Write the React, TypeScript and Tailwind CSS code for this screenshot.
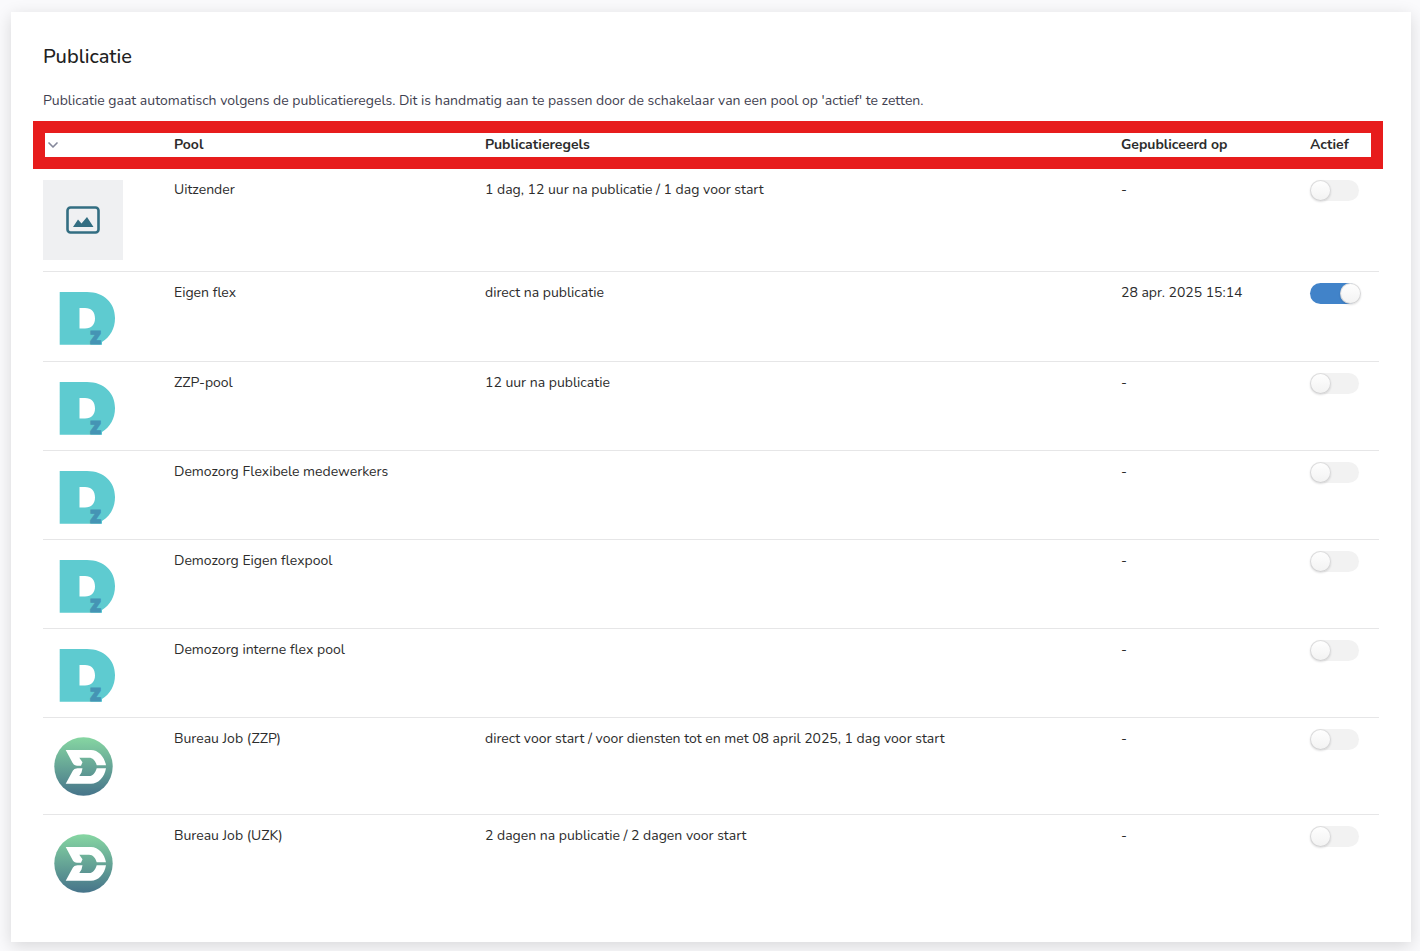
import { ChevronDown } from "lucide-react";

type Logo = "placeholder" | "demozorg" | "bureau";

interface Pool {
    name: string;
    rules: string;
    publishedAt: string;
    active: boolean;
    logo: Logo;
    logoHeight: number;
}

const pools: Pool[] = [
    { name: "Uitzender", rules: "1 dag, 12 uur na publicatie / 1 dag voor start", publishedAt: "-", active: false, logo: "placeholder", logoHeight: 80 },
    { name: "Eigen flex", rules: "direct na publicatie", publishedAt: "28 apr. 2025 15:14", active: true, logo: "demozorg", logoHeight: 67 },
    { name: "ZZP-pool", rules: "12 uur na publicatie", publishedAt: "-", active: false, logo: "demozorg", logoHeight: 66 },
    { name: "Demozorg Flexibele medewerkers", rules: "", publishedAt: "-", active: false, logo: "demozorg", logoHeight: 66 },
    { name: "Demozorg Eigen flexpool", rules: "", publishedAt: "-", active: false, logo: "demozorg", logoHeight: 66 },
    { name: "Demozorg interne flex pool", rules: "", publishedAt: "-", active: false, logo: "demozorg", logoHeight: 66 },
    { name: "Bureau Job (ZZP)", rules: "direct voor start / voor diensten tot en met 08 april 2025, 1 dag voor start", publishedAt: "-", active: false, logo: "bureau", logoHeight: 74 },
    { name: "Bureau Job (UZK)", rules: "2 dagen na publicatie / 2 dagen voor start", publishedAt: "-", active: false, logo: "bureau", logoHeight: 74 },
];

function PlaceholderLogo() {
    return (
        <svg viewBox="0 0 80 80" className="block size-20 bg-[#eff0f2]" aria-hidden="true">
            <rect x="24.5" y="27.5" width="31" height="25" rx="3" fill="none" stroke="#336e82" strokeWidth="2.6" />
            <path d="M30 47 L35 39.5 L38.5 43.5 L44 37 L50.5 47 Z" fill="#336e82" />
        </svg>
    );
}

function DemozorgLogo() {
    return (
        <svg viewBox="0 0 80 66" className="block h-[66px] w-20 overflow-visible" aria-hidden="true">
            <path
                fillRule="evenodd"
                fill="#5ecbd0"
                d="M16.7 9 H44 C61 9 72 20 72 35 C72 46 67 54 59 59 V61.7 H16.7 Z M36.5 25 V45.5 H42 C48.5 45.5 52 41.5 52 35.5 C52 29 48.5 25 42 25 Z"
            />
            <text x="47" y="61" fontSize="22" fontWeight="800" fill="#4594b4" stroke="#4594b4" strokeWidth="0.8" className="font-['Open_Sans',sans-serif]">z</text>
        </svg>
    );
}

function BureauLogo({ id }: { id: string }) {
    return (
        <svg viewBox="0 0 80 74" className="block h-[74px] w-20" aria-hidden="true">
            <defs>
                <linearGradient id={id} x1="0" y1="0" x2="0" y2="1">
                    <stop offset="0" stopColor="#86d6a2" />
                    <stop offset="1" stopColor="#46748a" />
                </linearGradient>
            </defs>
            <circle cx="40.5" cy="37.5" r="29.2" fill={`url(#${id})`} />
            <path
                fill="#fff"
                d="M22.7 21 H48 C55.5 21 61.5 28 63 36.2 H53.7 C52.5 32 50 28.7 46 28.7 H36.3 L39.5 33.3 L38 36.7 H34 C30.5 36.5 30 34.5 28.7 32.2 Z"
            />
            <path
                fill="#fff"
                d="M39.5 39.2 H34.5 C31 39.4 30 41.2 28.7 43.8 L22.7 54.7 H48 C55.5 54.7 61.5 48 63 39.2 H53.7 C52.5 43.5 50 47 46 47 H36.3 L38.5 43.5 Z"
            />
        </svg>
    );
}

function PoolLogo({ logo, id }: { logo: Logo; id: string }) {
    if (logo === "placeholder") return <PlaceholderLogo />;
    if (logo === "demozorg") return <DemozorgLogo />;
    return <BureauLogo id={id} />;
}

export default function App() {
    return (
        <div className="min-h-screen bg-[#fafafc] pt-3 pr-[9px] pb-[9px] pl-[11px] font-['Nunito','Lato',sans-serif]">
            <main className="bg-white px-8 pt-[33px] pb-[31px] shadow-[0_4px_16px_rgba(0,0,0,0.14)]">
                <h1 className="text-xl leading-6 font-medium text-[#212121]">Publicatie</h1>
                <p className="mt-5 text-sm leading-6 text-[#3f3f50]">
                    Publicatie gaat automatisch volgens de publicatieregels. Dit is handmatig aan te passen door de schakelaar van een pool op 'actief' te zetten.
                </p>
                <div className="relative mt-2">
                    <table className="w-full table-fixed border-separate border-spacing-0 text-left text-sm leading-5 text-[#2c2c2c]">
                        <colgroup>
                            <col className="w-[131px]" />
                            <col className="w-[311px]" />
                            <col />
                            <col className="w-[189px]" />
                            <col className="w-[69px]" />
                        </colgroup>
                        <thead>
                            <tr className="h-12">
                                <th className="p-0">
                                    <button type="button" aria-label="Sorteren" className="ml-0.5 block text-[#85889b]">
                                        <ChevronDown size={16} strokeWidth={2.5} />
                                    </button>
                                </th>
                                <th className="p-0 font-bold">Pool</th>
                                <th className="p-0 font-bold">Publicatieregels</th>
                                <th className="p-0 font-bold">Gepubliceerd op</th>
                                <th className="p-0 font-bold">Actief</th>
                            </tr>
                        </thead>
                        <tbody className="align-top *:*:border-b *:*:border-[#e6e6e7] *:*:py-[11px] *:last:*:border-b-0">
                            {pools.map((pool, index) => (
                                <tr key={pool.name}>
                                    <td>
                                        <div style={{ height: pool.logoHeight }}>
                                            <PoolLogo logo={pool.logo} id={`logo-${index}`} />
                                        </div>
                                    </td>
                                    <td>{pool.name}</td>
                                    <td>{pool.rules}</td>
                                    <td>{pool.publishedAt}</td>
                                    <td>
                                        <input
                                            type="checkbox"
                                            role="switch"
                                            aria-label={`${pool.name} actief`}
                                            defaultChecked={pool.active}
                                            className="relative block h-[21px] w-[49px] appearance-none rounded-full bg-[#f2f2f2] before:absolute before:top-0 before:left-0 before:size-[21px] before:rounded-full before:bg-linear-to-b before:from-white before:to-[#f2f2f2] before:shadow-[0_1px_2px_0_rgba(34,36,38,0.15),inset_0_0_0_1px_rgba(34,36,38,0.15)] checked:bg-[#4183c9] checked:before:left-[30px]"
                                        />
                                    </td>
                                </tr>
                            ))}
                        </tbody>
                    </table>
                    {/* highlight round the table header */}
                    <div className="pointer-events-none absolute top-0 -right-1 -left-2.5 h-12 border-12 border-[#e71c1c]" />
                </div>
            </main>
        </div>
    );
}
